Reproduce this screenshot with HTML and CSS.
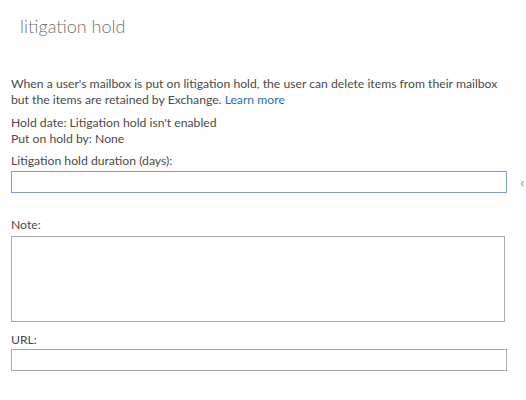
FILE: index.html
```html
<!DOCTYPE html>
<html lang="en">
<head>
  <meta charset="UTF-8" />
  <title>litigation hold</title>
  <link rel="stylesheet" href="styles.css">
</head>
<body>
  <h1 class="title">litigation hold</h1>

  <div class="panel">
    <p class="intro">
      When a user's mailbox is put on litigation hold, the user can delete items from their mailbox<br>
      but the items are retained by Exchange. <a href="#">Learn more</a>
    </p>

    <div class="info">
      <div>Hold date: Litigation hold isn't enabled</div>
      <div>Put on hold by: None</div>
    </div>

    <label class="field-label duration-label" for="duration">Litigation hold duration (days):</label>
    <div class="field-row">
      <input type="text" id="duration" class="text-input focused" />
      <span class="hint">&lsaquo;</span>
    </div>

    <label class="field-label note-label" for="note">Note:</label>
    <textarea id="note" class="note"></textarea>

    <label class="field-label url-label" for="url">URL:</label>
    <input type="text" id="url" class="text-input" />
  </div>
</body>
</html>
```

FILE: styles.css
```css
* {
  margin: 0;
  padding: 0;
  box-sizing: border-box;
}

body {
  font-family: Lato, 'Open Sans', sans-serif;
  font-size: 12.2px;
  color: #4a4a4a;
  background: #fff;
  width: 526px;
  height: 400px;
  overflow: hidden;
}

.title {
  font-weight: 300;
  font-size: 18px;
  line-height: 26px;
  color: #707070;
  padding: 13px 0 0 20px;
}

.panel {
  padding: 37px 0 0 11px;
  width: 526px;
}

.intro {
  line-height: 16px;
  white-space: nowrap;
}

.intro a {
  color: #1f6fb4;
  text-decoration: none;
}

.info {
  margin-top: 7px;
  line-height: 16px;
}

.field-label {
  display: block;
  line-height: 16px;
  margin-top: 5px;
}

.duration-label {
  margin-top: 6px;
}

.field-row {
  display: flex;
  align-items: center;
  margin-top: 2px;
}

.text-input {
  display: block;
  width: 496px;
  height: 22px;
  border: 1px solid #ababab;
  background: #fff;
  outline: none;
  font: inherit;
}

.text-input.focused {
  border-color: #7c9fd0;
}

.hint {
  margin-left: 13px;
  color: #999;
  font-size: 16px;
  line-height: 16px;
}

.note-label {
  margin-top: 24px;
}

.note {
  display: block;
  width: 494px;
  height: 86px;
  margin-top: 3px;
  border: 1px solid #ababab;
  resize: none;
  outline: none;
  font: inherit;
}

.url-label {
  margin-top: 10px;
}

#url {
  margin-top: 1px;
}
```
